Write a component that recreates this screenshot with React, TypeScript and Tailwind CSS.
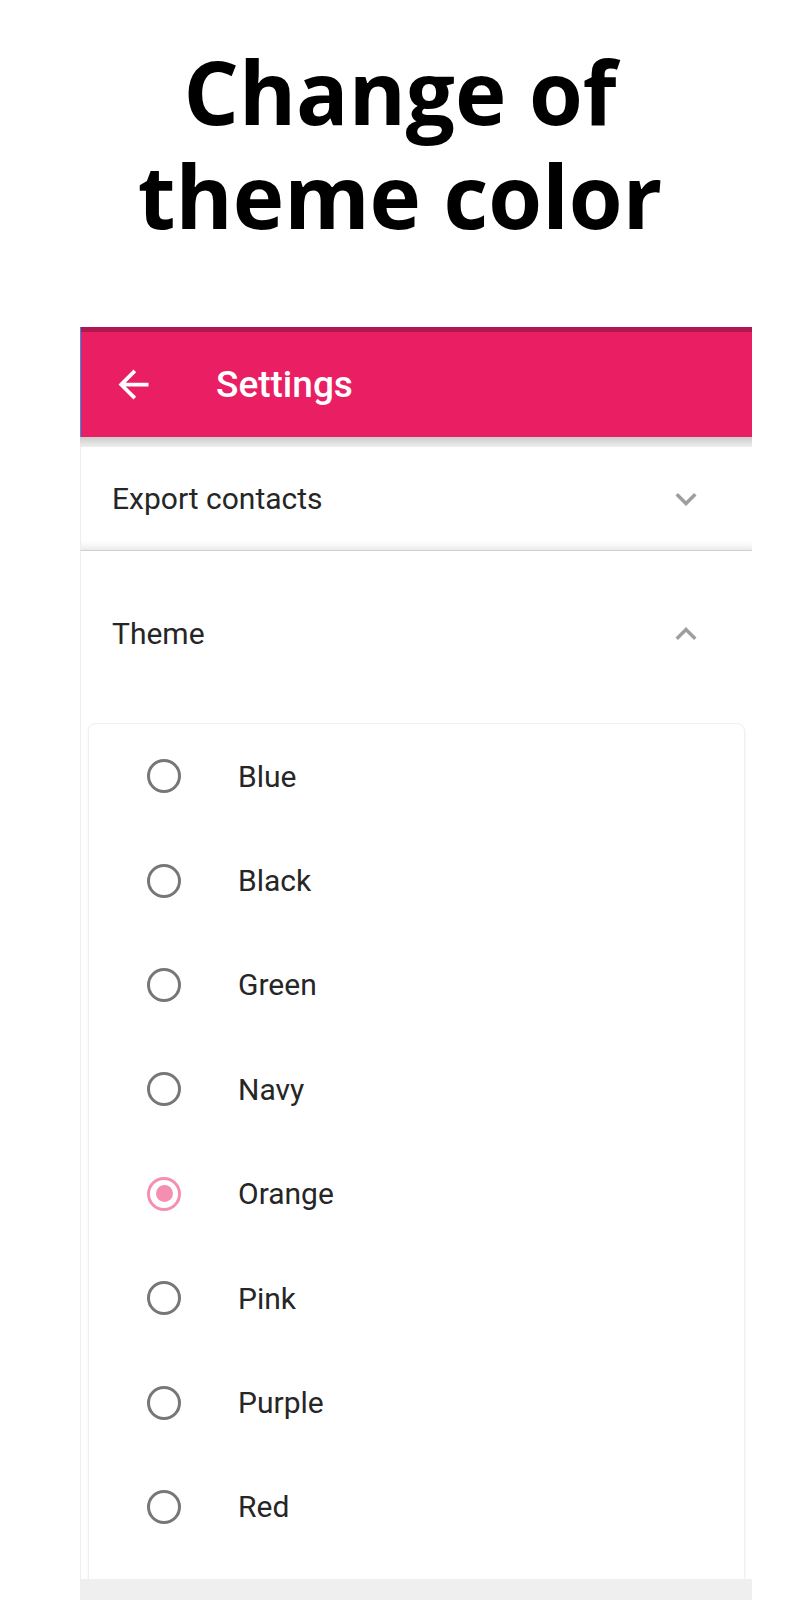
import { useState } from 'react';

const themes = ['Blue', 'Black', 'Green', 'Navy', 'Orange', 'Pink', 'Purple', 'Red'];

function ArrowBack() {
  return (
    <svg width="45" height="45" viewBox="0 0 24 24" fill="#ffffff">
      <path d="M20 11H7.83l5.59-5.59L12 4l-8 8 8 8 1.41-1.41L7.83 13H20v-2z" />
    </svg>
  );
}

function Chevron({ up }: { up?: boolean }) {
  return (
    <svg width="42" height="42" viewBox="0 0 24 24" fill="#9e9e9e" className={up ? 'rotate-180' : ''}>
      <path d="M16.59 8.59L12 13.17 7.41 8.59 6 10l6 6 6-6z" />
    </svg>
  );
}

function Radio({ checked }: { checked: boolean }) {
  if (checked) {
    return (
      <span className="w-[34px] h-[34px] rounded-full border-[3px] border-[#f48fb1] flex items-center justify-center shrink-0">
        <span className="w-[17px] h-[17px] rounded-full bg-[#f48fb1]" />
      </span>
    );
  }
  return <span className="w-[34px] h-[34px] rounded-full border-[3px] border-[#777777] shrink-0" />;
}

export default function App() {
  const [theme, setTheme] = useState('Orange');

  return (
    <div className="w-[800px] h-[1600px] overflow-hidden bg-white font-['Roboto',sans-serif]">
      {/* Heading */}
      <h1 className="pt-[39px] text-center font-['Open_Sans',sans-serif] font-bold text-[87px] leading-[104px] text-black">
        <span className="block h-[104px]">Change of</span>
        <span className="block h-[104px]">theme color</span>
      </h1>

      <div className="ml-[80px] w-[672px] mt-[80px]">
        {/* App bar */}
        <div className="border-l border-[#2196f3]">
          <div className="h-[5px] bg-[#b0174f]" />
          <div className="h-[105px] bg-[#e91e63] flex items-center pl-[30px]">
            <ArrowBack />
            <span className="ml-[60px] text-white text-[37px] font-medium">Settings</span>
          </div>
        </div>
        <div className="h-[10px] bg-linear-to-b from-[#cccccc] to-[#eeeeee]" />

        {/* Export contacts */}
        <div className="h-[104px] flex items-center justify-between pl-[31px] pr-[45px] border-l border-[#eeeeee] border-b border-b-[#cfcfcf] shadow-[inset_0_-9px_8px_-7px_rgba(0,0,0,0.12)]">
          <span className="text-[30px] text-[#262626]">Export contacts</span>
          <Chevron />
        </div>

        {/* Theme */}
        <div className="h-[1028px] overflow-hidden border-l border-[#eeeeee]">
          <div className="h-[165px] flex items-center justify-between pl-[31px] pr-[45px]">
            <span className="text-[30px] text-[#262626]">Theme</span>
            <Chevron up />
          </div>
          <div className="mt-[7px] ml-[7px] w-[657px] h-[900px] rounded-[8px] border border-[#f0f0f0] shadow-[0_1px_3px_rgba(0,0,0,0.06)] bg-white">
            {themes.map(t => (
              <button
                key={t}
                onClick={() => setTheme(t)}
                className="w-full h-[104.4px] flex items-center pl-[58px] text-left"
              >
                <Radio checked={theme === t} />
                <span className="ml-[57px] text-[30px] text-[#262626]">{t}</span>
              </button>
            ))}
          </div>
        </div>
        <div className="h-[21px] bg-[#efefef]" />
      </div>
    </div>
  );
}
